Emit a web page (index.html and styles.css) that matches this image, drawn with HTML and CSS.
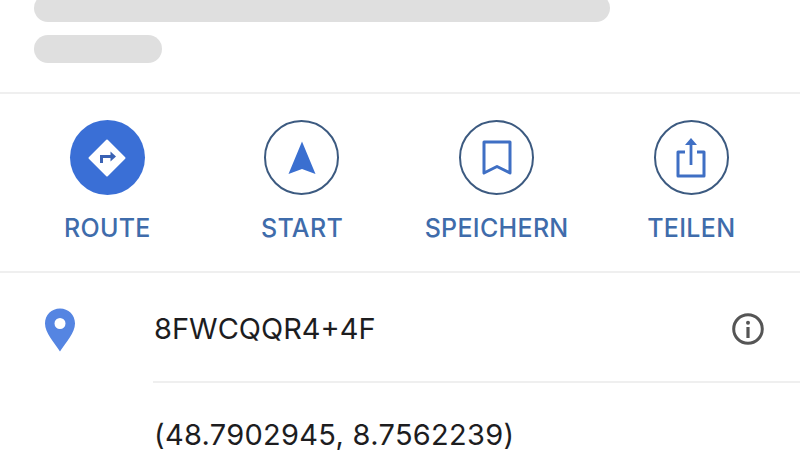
FILE: index.html
```html
<!DOCTYPE html>
<html lang="en">
<head>
<meta charset="UTF-8">
<meta name="viewport" content="width=device-width, initial-scale=1.0">
<title>Ort</title>
<link rel="stylesheet" href="styles.css">
</head>
<body>
  <div class="page">
    <div class="skeleton">
      <div class="bar bar-long"></div>
      <div class="bar bar-short"></div>
    </div>

    <div class="actions">
      <div class="action">
        <div class="circle circle-filled">
          <svg width="38" height="38" viewBox="0 0 38 38">
            <path d="M19 1.5 L36.5 19 L19 36.5 L1.500 19 Z" fill="#fff" stroke="#fff" stroke-width="2" stroke-linejoin="round"/>
            <path d="M13.500 24 V17.500 H24" fill="none" stroke="#3a62b4" stroke-width="3"/>
            <path d="M22.500 12.500 L28 17.500 L22.500 22.500 Z" fill="#3a62b4"/>
          </svg>
        </div>
        <span class="action-label">ROUTE</span>
      </div>
      <div class="action">
        <div class="circle">
          <svg width="28" height="34" viewBox="0 0 28 34">
            <path d="M14 0.500 L27.500 33 L14 28 L0.500 33 Z" fill="#3a6fd0"/>
          </svg>
        </div>
        <span class="action-label">START</span>
      </div>
      <div class="action">
        <div class="circle">
          <svg width="30" height="36" viewBox="0 0 30 36">
            <path d="M2 2 H28 V33 L15 26.500 L2 33 Z" fill="none" stroke="#3f6fc4" stroke-width="3" stroke-linejoin="round"/>
          </svg>
        </div>
        <span class="action-label">SPEICHERN</span>
      </div>
      <div class="action">
        <div class="circle">
          <svg width="30" height="40" viewBox="0 0 30 40">
            <path d="M9 14 H2 V38 H28 V14 H21" fill="none" stroke="#3f6fc4" stroke-width="3" stroke-linejoin="round"/>
            <path d="M15 4 V27" fill="none" stroke="#3f6fc4" stroke-width="2.800"/>
            <path d="M15 0 L21 7 H9 Z" fill="#3f6fc4"/>
          </svg>
        </div>
        <span class="action-label">TEILEN</span>
      </div>
    </div>

    <div class="info">
      <div class="info-icon">
        <svg width="32" height="44" viewBox="0 0 32 44">
          <path fill-rule="evenodd" d="M16 0.500 C7.500 0.500 1 7 1 15.500 C1 25 10 34 16 43.500 C22 34 31 25 31 15.500 C31 7 24.500 0.500 16 0.500 Z M16 10 A5.500 5.500 0 1 1 16 21 A5.500 5.500 0 1 1 16 10 Z" fill="#5585e2"/>
        </svg>
      </div>
      <div class="info-rows">
        <div class="info-row info-row-first">
          <span class="info-text">8FWCQQR4+4F</span>
          <svg class="help-icon" width="32" height="32" viewBox="0 0 32 32">
            <circle cx="16" cy="16" r="14.300" fill="none" stroke="#555" stroke-width="3"/>
            <rect x="14.400" y="14" width="3.200" height="11" fill="#555"/>
            <circle cx="16" cy="9.800" r="2" fill="#555"/>
          </svg>
        </div>
        <div class="info-row">
          <span class="info-text info-coords">(48.7902945, 8.7562239)</span>
        </div>
      </div>
    </div>
  </div>
</body>
</html>
```
FILE: styles.css
```css
body {
  margin: 0;
  padding: 0;
  background-color: #fff;
  font-family: Inter, "Liberation Sans", sans-serif;
}

.page {
  width: 800px;
  height: 450px;
  overflow: hidden;
}

.skeleton {
  height: 100px;
  box-sizing: border-box;
  margin-top: -6px;
  padding-left: 34px;
  display: flex;
  flex-direction: column;
  gap: 13px;
  border-bottom: 2px solid #efefef;
}

.bar {
  height: 28px;
  border-radius: 14px;
  background-color: #dfdfdf;
}

.bar-long {
  width: 576px;
}

.bar-short {
  width: 128px;
}

.actions {
  height: 177px;
  padding-left: 10px;
  display: grid;
  grid-template-columns: repeat(4, 194.67px);
  border-bottom: 2px solid #efefef;
}

.action {
  display: flex;
  flex-direction: column;
  align-items: center;
  padding-top: 26px;
}

.circle {
  width: 75px;
  height: 75px;
  box-sizing: border-box;
  border: 2px solid #3c5a80;
  border-radius: 50%;
  display: flex;
  align-items: center;
  justify-content: center;
}

.circle-filled {
  background-color: #3a6fd6;
  border: none;
}

.action-label {
  margin-top: 18px;
  font-size: 25px;
  font-weight: 500;
  letter-spacing: 0.3px;
  line-height: 30px;
  color: #3f6cab;
}

.info {
  display: flex;
}

.info-icon {
  width: 153px;
  padding: 35px 0 0 44px;
  box-sizing: border-box;
}

.info-rows {
  flex: 1;
}

.info-row {
  height: 104px;
  box-sizing: border-box;
  padding-left: 1px;
  padding-right: 36px;
  display: flex;
  align-items: center;
  justify-content: space-between;
}

.info-row-first {
  height: 110px;
  padding-top: 4px;
  border-bottom: 2px solid #efefef;
}

.info-text {
  font-size: 29px;
  line-height: 28px;
  color: #1d1d1f;
}

.info-coords {
  letter-spacing: 0.3px;
}
```
